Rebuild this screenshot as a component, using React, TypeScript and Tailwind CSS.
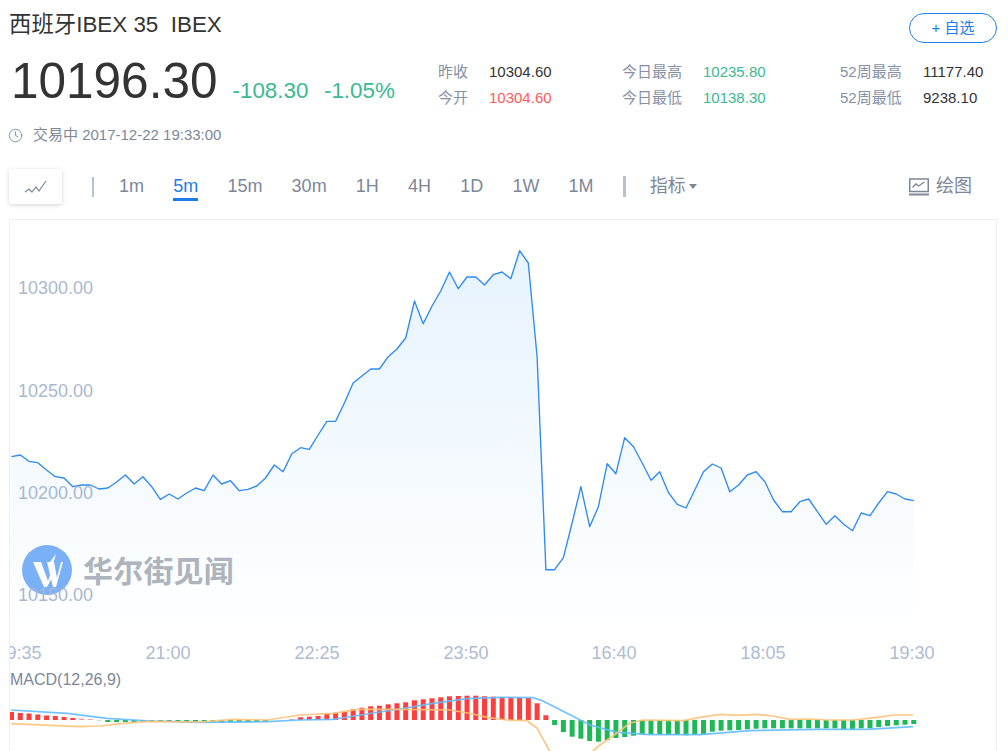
import { Clock } from "lucide-react";

const Y = [456.7,455,461.3,462.7,470,476.7,478,486.7,485,485,489,488,482,475,484,476.7,486.7,499.3,494,499,493,488,490.7,475,484,480.7,490.7,489.3,486,478,465,471.7,453.7,447.7,449.3,435,421.3,421.3,403,383,376,369,369,356.7,349,338,301,323.7,306,291,272,288.7,277,277,285,274.7,272,278.7,250.7,263,356.7,569.7,569.7,557.7,523,486.7,526.7,506.7,463.7,473.7,437.7,446.7,463,480.3,471.7,492.7,504.3,508,490,471.7,464,468,491.7,485,475,471.7,481.7,500,511.7,511.7,501.7,499,511.7,524.3,515.7,524.3,530.7,513,515.7,503,491.7,494,499,500.7];
const X0 = 11.5;
const STEP = 8.76;
const pts = Y.map((y, i) => `${(X0 + i * STEP).toFixed(1)},${y}`).join(" ");
const area = `${X0},632 ${pts} ${(X0 + 103 * STEP).toFixed(1)},632`;

const M = [8,7,6.5,5.5,4.5,4,3,2,1.5,1,-0.6,-2,-2,-2,-2,-2,-2,-2,-2,-2,-2,-2,-2,-2,-2,-2,-2,-2,-2,-2,0,0,1,2.7,3.3,4,6,7.3,8.3,10.7,12.3,13.7,14.3,15.7,16.7,17.7,19.7,20.7,21.7,22.7,23.7,24,24.3,24.3,23.7,23.3,22.7,22.3,22.3,22,16.7,4.7,-5,-12,-16.7,-18.7,-21,-21.7,-20,-18,-17,-15.7,-14.3,-14,-14,-14.7,-15,-15.3,-15,-14,-11.7,-10.7,-10.3,-10,-9.3,-8.7,-8.3,-8.3,-8.3,-8.3,-8.3,-8.3,-8.3,-8.3,-8.3,-9,-9.7,-8.3,-8.3,-7,-6,-5.3,-4.7,-4];

const dif = "11,710 67,713.3 107,718.3 150,721 200,722.3 267,721.7 300,720 333,719.3 367,714 400,709 433,703.3 467,698.7 500,697.3 533,697.7 543,701 567,713.3 590,725 617,732.3 650,734.7 700,734.7 750,730.7 817,729.3 867,729.3 913,726.7";
const dea = "11,723.7 80,726.7 100,726 123,723.3 150,721.3 200,722 233,719.3 267,720 300,715 333,713.3 357,709.3 400,709.3 450,710 473,714 487,717.3 507,720 527,720.7 537,728 548,748 553,758 585,758 600,745 617,733 630,723 643,720 683,720.7 700,717.3 720,714.3 737,715.3 757,714.3 773,716 790,719.3 810,719 827,720 853,720 877,717.3 893,715 913,715";

const tabs = ["1m", "5m", "15m", "30m", "1H", "4H", "1D", "1W", "1M"];
const ticks: [number, string][] = [[19, "19:35"], [168, "21:00"], [317, "22:25"], [466, "23:50"], [614, "16:40"], [763, "18:05"], [912, "19:30"]];
const levels: [number, string][] = [[294, "10300.00"], [397, "10250.00"], [499, "10200.00"], [601, "10150.00"]];

function Stat({ label, value, color, w1, w2 }: { label: string; value: string; color: string; w1: string; w2: string }) {
  return (
    <>
      <span className={`${w1} text-[#8590a6]`}>{label}</span>
      <span className={`${w2} ${color}`}>{value}</span>
    </>
  );
}

export default function App() {
  return (
    <div className="relative h-[751px] w-[1008px] overflow-hidden bg-white font-['Liberation_Sans','Noto_Sans_CJK_SC',sans-serif] text-[#333]">
      <div className="pl-[10px] pr-[11px] pt-[13px]">
        <div className="flex h-[30px] items-center justify-between">
          <h1 className="-ml-px -mt-[7px] whitespace-pre text-[22.4px] font-normal leading-[24px] text-[#333]">西班牙IBEX 35  IBEX</h1>
          <button className="flex h-[30px] w-[88px] items-center justify-center rounded-full border border-[#1e7de6] text-[15px] text-[#1e7de6]">+ 自选</button>
        </div>

        <div className="flex h-[79px]">
          <div className="flex w-[428px] items-baseline pl-px pt-[13px]">
            <span className="text-[49.5px] leading-[50px] text-[#333]">10196.30</span>
            <span className="ml-[15px] text-[22.4px] text-[#3bb98f]">-108.30</span>
            <span className="ml-[15.5px] text-[22.4px] text-[#3bb98f]">-1.05%</span>
          </div>
          <div className="pt-[16px] text-[15px]">
            <div className="flex h-[26px] items-center">
              <Stat label="昨收" value="10304.60" color="text-[#333]" w1="w-[51px]" w2="w-[133px]" />
              <Stat label="今日最高" value="10235.80" color="text-[#3bb98f]" w1="w-[81px]" w2="w-[137px]" />
              <Stat label="52周最高" value="11177.40" color="text-[#333]" w1="w-[83px]" w2="" />
            </div>
            <div className="flex h-[26px] items-center">
              <Stat label="今开" value="10304.60" color="text-[#ff5b5b]" w1="w-[51px]" w2="w-[133px]" />
              <Stat label="今日最低" value="10138.30" color="text-[#3bb98f]" w1="w-[81px]" w2="w-[137px]" />
              <Stat label="52周最低" value="9238.10" color="text-[#333]" w1="w-[83px]" w2="" />
            </div>
          </div>
        </div>

        <div className="-ml-[2px] flex h-[26px] items-center gap-[10px] text-[15px] text-[#7d8798]">
          <Clock size={15} strokeWidth={1.5} color="#8590a6" />
          <span>交易中 2017-12-22 19:33:00</span>
        </div>

        <div className="mt-[21px] flex h-[35px] items-center text-[18px] text-[#7d8798]">
          <div className="-ml-px flex h-[35px] w-[53px] items-center justify-center rounded-[2px] bg-white shadow-[0_1px_4px_rgba(0,0,0,0.18)]">
            <svg width="24" height="14" viewBox="0 0 24 14" fill="none" stroke="#7d8798" strokeWidth="1.2">
              <polyline points="1,12 5,9 8,12 12,7 15,11 22,1" />
            </svg>
          </div>
          <div className="ml-[30px] h-[20px] w-[2px] bg-[#b8c0d0]" />
          <div className="ml-[25px] flex gap-[29.2px]">
            {tabs.map((t) => (
              <div key={t} className={t === "5m" ? "relative text-[#1e7de6]" : ""}>
                {t}
                {t === "5m" && <div className="absolute left-0 right-0 top-[25px] h-[3px] bg-[#1e7de6]" />}
              </div>
            ))}
          </div>
          <div className="ml-[29px] h-[21px] w-[3px] bg-[#b8c0d0]" />
          <div className="ml-[24px] flex items-center gap-[3px]">
            指标
            <svg width="8" height="5" viewBox="0 0 8 5"><polygon points="0,0 8,0 4,5" fill="#7d8798" /></svg>
          </div>
          <div className="ml-auto mr-[25px] flex items-center gap-[7px]">
            <svg width="20" height="18" viewBox="0 0 20 18" fill="none" stroke="#7d8798">
              <rect x="0.75" y="1" width="18.5" height="12.5" strokeWidth="1.5" />
              <polyline points="3.5,9.5 7,6 9.5,8 15.5,4" strokeWidth="1.4" />
              <line x1="0" y1="16.5" x2="20" y2="16.5" strokeWidth="2" />
            </svg>
            绘图
          </div>
        </div>
      </div>

      <div className="ml-[9px] mr-[11px] mt-[15px] border border-b-0 border-[#eeeeee]">
        <svg className="block" width="986" height="532" viewBox="10 220 986 532" fontFamily="'Liberation Sans','Noto Sans CJK SC',sans-serif">
          <defs>
            <linearGradient id="fill" gradientUnits="userSpaceOnUse" x1="0" y1="250" x2="0" y2="632">
              <stop offset="0" stopColor="#e6f3fe" />
              <stop offset="1" stopColor="#ffffff" />
            </linearGradient>
          </defs>
          <polygon points={area} fill="url(#fill)" />
          <polyline points={pts} fill="none" stroke="#2f8af0" strokeWidth="1.35" strokeLinejoin="round" />

          <circle cx="47" cy="570" r="25" fill="#7ab0f7" />
          <polygon points="33,562 41,562 48,581 53,567 55,572 47,587 44,587" fill="#fff" />
          <polygon points="47,562 54,562 57,578 61,562 63,562 56,587 53,587" fill="#fff" />
          <polygon points="50,562 56,554 53,564" fill="#fff" />
          <text x="83" y="582" fontSize="30" fontWeight="700" letterSpacing="0.2" fill="#adb4bc">华尔街见闻</text>

          {levels.map(([y, t]) => (
            <text key={t} x="18" y={y} fontSize="18" fill="#aab8cf">{t}</text>
          ))}
          {ticks.map(([x, t]) => (
            <text key={t} x={x} y="659" fontSize="18" textAnchor="middle" fill="#aebcd3">{t}</text>
          ))}
          <text x="10" y="685" fontSize="16" fill="#7d8798">MACD(12,26,9)</text>

          {M.map((h, i) => (
            <rect
              key={i}
              x={X0 + i * STEP - 2.5}
              y={h > 0 ? 720 - h : 720}
              width="5"
              height={Math.abs(h)}
              fill={h > 0 ? "#ff3d3d" : "#1fb856"}
              opacity={Math.abs(h) < 1.6 ? 0.5 : 1}
            />
          ))}
          <polyline points={dif} fill="none" stroke="#63bbff" strokeWidth="1.7" strokeOpacity="0.9" />
          <polyline points={dea} fill="none" stroke="#fcc27a" strokeWidth="1.7" strokeOpacity="0.9" />
        </svg>
      </div>
    </div>
  );
}
